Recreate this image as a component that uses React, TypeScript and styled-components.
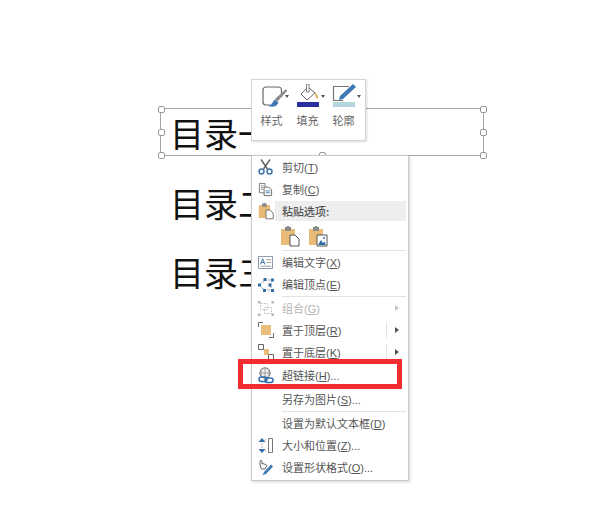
import React from "react";
import styled, { createGlobalStyle, css } from "styled-components";

const GlobalStyle = createGlobalStyle`
  html, body {
    margin: 0;
    padding: 0;
    background: #fff;
  }
  body {
    font-family: "Noto Sans CJK SC", "Liberation Sans", sans-serif;
  }
`;

const UI_FONT = `"Liberation Sans", "Noto Sans CJK SC", sans-serif`;

const ScissorsIcon = () => (
  <svg width="15" height="16" viewBox="0 0 15 16">
    <path d="M3 .5 L9.500 10 M12 .5 L5.500 10" stroke="#666" strokeWidth="1.500" fill="none" />
    <circle cx="3.500" cy="12.500" r="2.500" stroke="#3f74ac" strokeWidth="1.500" fill="none" />
    <circle cx="11.500" cy="12.500" r="2.500" stroke="#3f74ac" strokeWidth="1.500" fill="none" />
  </svg>
);

const CopyIcon = () => (
  <svg width="15" height="15" viewBox="0 0 16 16">
    <path d="M1.500 1.500h6v10h-6z" fill="#fff" stroke="#7a7a7a" />
    <path d="M3 4h3M3 6h3M3 8h2" stroke="#8a8a8a" />
    <path d="M6.500 5.500h5l3 3v6h-8z" fill="#fff" stroke="#666" />
    <path d="M8 9.500h5M8 11.500h5" stroke="#4f82b8" />
  </svg>
);

const ClipboardIcon = ({ size = 16, variant = "doc" }: { size?: number; variant?: "doc" | "picture" }) => (
  <svg width={size} height={size * 1.1} viewBox="0 0 20 22">
    <path d="M1 4h14v16H1z" fill="#e8bb78" />
    <path d="M5 2h6v4H5z" fill="#8c8c8c" />
    <path d="M6.800 1h2.400v2H6.800z" fill="#8c8c8c" />
    {variant === "doc" ? (
      <path d="M10 10h5l4 4v7h-9z" fill="#fff" stroke="#555" />
    ) : (
      <>
        <path d="M9 10h10v11H9z" fill="#fff" stroke="#555" />
        <path d="M10 20l3-5 2 3 1.500-1.500L18 20z" fill="#2f6ea8" />
        <circle cx="16" cy="13" r="1" fill="#2f6ea8" />
      </>
    )}
  </svg>
);

const EditTextIcon = () => (
  <svg width="15" height="13" viewBox="0 0 16 14">
    <path d="M.5.5h15v13H.5z" fill="#fff" stroke="#7f8fa3" />
    <path d="M5 3L2.600 9M5 3l2.400 6M3.600 7h2.800" stroke="#2f6ea8" fill="none" />
    <path d="M9 4h5M9 7h5M3 11h11" stroke="#999" />
  </svg>
);

const EditPointsIcon = () => (
  <svg width="16" height="14" viewBox="0 0 16 14">
    <path d="M2 7L7 2l7 0-2 5 2 5H6z" stroke="#888" strokeDasharray="2 1.400" fill="none" />
    <path d="M0 5.500h3v3H0zM5.500 0h3v3h-3zM13 .5h3v3h-3zM5 11h3v3H5zM13 11h3v3h-3zM10.500 5.500h3v3h-3z" fill="#2f6ea8" />
  </svg>
);

const GroupIcon = () => (
  <svg width="16" height="15" viewBox="0 0 16 15" opacity="0.6">
    <path d="M2.500 2.500h7v6h-7zM6.500 6.500h7v6h-7z" stroke="#999" strokeDasharray="2 1.200" fill="none" />
    <path d="M0 0h2.500v2.500H0zM13.500 0H16v2.500h-2.500zM0 12.500h2.500V15H0zM13.500 12.500H16V15h-2.500z" fill="#888" />
  </svg>
);

const ToFrontIcon = () => (
  <svg width="16" height="16" viewBox="0 0 16 16">
    <path d="M.5 5V.5H5M11 15.500h4.500V11" stroke="#666" fill="none" />
    <path d="M3 3h10v10H3z" fill="#e9bd7b" />
  </svg>
);

const ToBackIcon = () => (
  <svg width="16" height="16" viewBox="0 0 16 16">
    <path d="M.5.5h5v5h-5z" fill="#fff" stroke="#666" />
    <path d="M6 5h5v6H6z" fill="#e9bd7b" />
    <path d="M10.500 10.500h5v5h-5z" fill="#fff" stroke="#666" />
  </svg>
);

const LinkIcon = () => (
  <svg width="16" height="17" viewBox="0 0 16 17">
    <circle cx="7" cy="6" r="5.200" fill="#ececec" stroke="#777" />
    <path d="M2 6h10M7 1v10M4 2c-1.600 2.500-1.600 5.500 0 8M10 2c1.600 2.500 1.600 5.500 0 8" stroke="#888" fill="none" strokeWidth="0.7" />
    <rect x="1" y="10" width="8" height="4.500" rx="2.200" fill="none" stroke="#2f6ea8" strokeWidth="1.500" />
    <rect x="7" y="11" width="8" height="4.500" rx="2.200" fill="none" stroke="#2f6ea8" strokeWidth="1.500" />
  </svg>
);

const SizeIcon = () => (
  <svg width="16" height="17" viewBox="0 0 16 17">
    <path d="M4 1L.5 5h7zM4 16L.5 12h7z" fill="#2f6ea8" />
    <path d="M4 6.500v1M4 9.500v1" stroke="#777" />
    <path d="M7 3h1M7 14h1" stroke="#999" />
    <path d="M10.500 1.500h4v14h-4z" fill="#fff" stroke="#777" />
  </svg>
);

const FormatIcon = () => (
  <svg width="16" height="17" viewBox="0 0 16 17">
    <path d="M2 6V2.500c0-1.500 2-1.500 2 0V5l1-.5 1 .5 1.500.5L9 6.500 7 10 3.500 10z" fill="#fff" stroke="#666" />
    <path d="M6 13l7-7.500 2 2-7 7.500-3.500 1z" fill="#3f78b3" />
  </svg>
);

const StyleIcon = () => (
  <svg width="30" height="28" viewBox="0 0 30 28">
    <path d="M24.500 13V6a3 3 0 0 0-3-3H9a3 3 0 0 0-3 3v12a3 3 0 0 0 3 3h4" fill="#fff" stroke="#666" strokeWidth="1.200" />
    <path d="M29 5L18 15l2.500 2.500L30 7z" fill="#8a8a8a" />
    <path d="M18 15.500c-2 1-2 5-7 6.500 5 1.500 9 .5 10.500-3.500z" fill="#3f78b3" />
  </svg>
);

const FillIcon = () => (
  <svg width="24" height="28" viewBox="0 0 24 28">
    <path d="M12 3L5 10l6 6 8-7z" fill="#fff" stroke="#666" />
    <path d="M10.500 0h2.500v8h-2.500z" fill="#fff" stroke="#666" strokeWidth="0.800" />
    <path d="M19 8c2 2 3.500 4 3 7-2-1-3.500-3-3-7z" fill="#e4b46d" />
    <path d="M1 18h22v5H1z" fill="#2b2f9e" />
  </svg>
);

const OutlineIcon = () => (
  <svg width="24" height="28" viewBox="0 0 24 28">
    <path d="M17 2.500H1.500v14H11" fill="none" stroke="#777" strokeWidth="1.200" />
    <path d="M21 0l3 3L11 15l-4 1 1-4z" fill="#3f78b3" />
    <path d="M1 18h22v5H1z" fill="#b4d8de" />
  </svg>
);

const Slide = styled.div`
  position: relative;
  width: 600px;
  height: 510px;
  overflow: hidden;
  background: #fff;
  padding: 98px 0 0 170px;
  box-sizing: border-box;
`;

const TocLine = styled.div`
  height: 69.5px;
  line-height: 69.5px;
  font-size: 34px;
  color: #111;
  white-space: nowrap;
`;

const Frame = styled.div`
  position: absolute;
  left: 160px;
  top: 108px;
  width: 324px;
  height: 48px;
  box-sizing: border-box;
  border: 1px solid #a5a5a5;
`;

const Handle = styled.span<{ $x: number; $y: number }>`
  position: absolute;
  left: ${({ $x }) => $x}%;
  top: ${({ $y }) => $y}%;
  width: 7px;
  height: 7px;
  margin: -3.500px 0 0 -3.500px;
  box-sizing: border-box;
  background: #fff;
  border: 1px solid #999;
  border-radius: 2px;
`;

const MiniToolbar = styled.div`
  position: absolute;
  left: 251px;
  top: 79px;
  width: 115px;
  height: 62px;
  box-sizing: border-box;
  display: flex;
  justify-content: center;
  gap: 14px;
  padding: 4px 2px 0 0;
  background: #fff;
  border: 1px solid #d4d4d4;
  box-shadow: 1px 1px 2px rgba(0, 0, 0, 0.15);
`;

const ToolButton = styled.div`
  position: relative;
  display: flex;
  flex-direction: column;
  align-items: center;
  width: 22px;
  font-size: 11px;
  line-height: 16px;
  color: #666;
  svg {
    height: 28px;
    flex: none;
  }
`;

const DropCaret = styled.i`
  position: absolute;
  right: -6px;
  top: 11px;
  border-left: 2.500px solid transparent;
  border-right: 2.500px solid transparent;
  border-top: 3px solid #555;
`;

const Menu = styled.div`
  position: absolute;
  left: 251px;
  top: 155px;
  width: 158px;
  height: 326px;
  box-sizing: border-box;
  padding: 0 2px 0 1px;
  background: #fff;
  border: 1px solid #c9c9c9;
  box-shadow: 1px 1px 3px rgba(0, 0, 0, 0.18);
  font-size: 11px;
  color: #555;
`;

const Row = styled.div<{ $disabled?: boolean; $height?: number }>`
  display: flex;
  align-items: center;
  height: ${({ $height }) => $height ?? 22}px;
  ${({ $disabled }) =>
    $disabled &&
    css`
      color: #b2b2b2;
    `}
`;

const IconCell = styled.span`
  flex: none;
  width: 29px;
  display: flex;
  justify-content: center;
  padding-right: 4px;
  box-sizing: border-box;
`;

const Label = styled.span`
  flex: 1;
  white-space: nowrap;
  line-height: 16px;
`;

const Latin = styled.span`
  font-family: ${UI_FONT};
`;

const Key = styled.u`
  text-underline-offset: 1px;
`;

const PasteHeader = styled.span`
  flex: 1;
  height: 20px;
  line-height: 20px;
  margin-left: -7px;
  padding-left: 7px;
  background: #eeeeee;
  font-weight: 500;
  color: #555;
`;

const PasteOptions = styled.div`
  display: flex;
  gap: 8px;
  height: 28px;
  align-items: center;
  padding-left: 27px;
`;

const Separator = styled.div`
  height: 1px;
  margin: 0 0 0 29px;
  background: #e2e2e2;
`;

const SubmenuArrow = styled.i<{ $disabled?: boolean }>`
  flex: none;
  width: 0;
  height: 0;
  margin-right: 7px;
  border-top: 3.500px solid transparent;
  border-bottom: 3.500px solid transparent;
  border-left: 4px solid ${({ $disabled }) => ($disabled ? "#c4c4c4" : "#555")};
`;

const ArrowDivider = styled.span`
  flex: none;
  width: 1px;
  height: 16px;
  margin-right: 8px;
  background: #e4e4e4;
`;

const Highlight = styled.div`
  position: absolute;
  left: 238px;
  top: 359px;
  width: 164px;
  height: 30px;
  box-sizing: border-box;
  border: 5px solid #f22c2f;
  pointer-events: none;
`;

type Item = {
  icon?: React.ReactNode;
  label: string;
  hotkey?: string;
  ellipsis?: boolean;
  disabled?: boolean;
  submenu?: boolean;
  divider?: boolean;
  height?: number;
};

function MenuRow({ icon, label, hotkey, ellipsis, disabled, submenu, divider, height }: Item) {
  return (
    <Row $disabled={disabled} $height={height}>
      <IconCell>{icon}</IconCell>
      <Label>
        {label}
        <Latin>
          (<Key>{hotkey}</Key>){ellipsis ? "..." : ""}
        </Latin>
      </Label>
      {divider && <ArrowDivider />}
      {submenu && <SubmenuArrow $disabled={disabled} />}
    </Row>
  );
}

const handles = [
  [0, 0],
  [100, 0],
  [0, 50],
  [100, 50],
  [0, 100],
  [50, 100],
  [100, 100],
];

export default function App() {
  return (
    <>
      <GlobalStyle />
      <Slide>
        <TocLine>目录一</TocLine>
        <TocLine>目录二</TocLine>
        <TocLine>目录三</TocLine>

        <Frame>
          {handles.map(([x, y]) => (
            <Handle key={`${x}-${y}`} $x={x} $y={y} />
          ))}
        </Frame>

        <MiniToolbar>
          <ToolButton>
            <StyleIcon />
            <DropCaret />
            样式
          </ToolButton>
          <ToolButton>
            <FillIcon />
            <DropCaret />
            填充
          </ToolButton>
          <ToolButton>
            <OutlineIcon />
            <DropCaret />
            轮廓
          </ToolButton>
        </MiniToolbar>

        <Menu>
          <MenuRow icon={<ScissorsIcon />} label="剪切" hotkey="T" />
          <MenuRow icon={<CopyIcon />} label="复制" hotkey="C" />
          <Row>
            <IconCell>
              <ClipboardIcon />
            </IconCell>
            <PasteHeader>粘贴选项:</PasteHeader>
          </Row>
          <PasteOptions>
            <ClipboardIcon size={20} />
            <ClipboardIcon size={20} variant="picture" />
          </PasteOptions>
          <Separator />
          <MenuRow icon={<EditTextIcon />} label="编辑文字" hotkey="X" />
          <MenuRow icon={<EditPointsIcon />} label="编辑顶点" hotkey="E" height={23} />
          <Separator />
          <MenuRow icon={<GroupIcon />} label="组合" hotkey="G" disabled submenu />
          <MenuRow icon={<ToFrontIcon />} label="置于顶层" hotkey="R" divider submenu />
          <MenuRow icon={<ToBackIcon />} label="置于底层" hotkey="K" divider submenu />
          <MenuRow icon={<LinkIcon />} label="超链接" hotkey="H" ellipsis height={24} />
          <MenuRow label="另存为图片" hotkey="S" ellipsis height={24} />
          <Separator />
          <MenuRow label="设置为默认文本框" hotkey="D" />
          <MenuRow icon={<SizeIcon />} label="大小和位置" hotkey="Z" ellipsis />
          <MenuRow icon={<FormatIcon />} label="设置形状格式" hotkey="O" ellipsis />
        </Menu>

        <Highlight />
      </Slide>
    </>
  );
}
